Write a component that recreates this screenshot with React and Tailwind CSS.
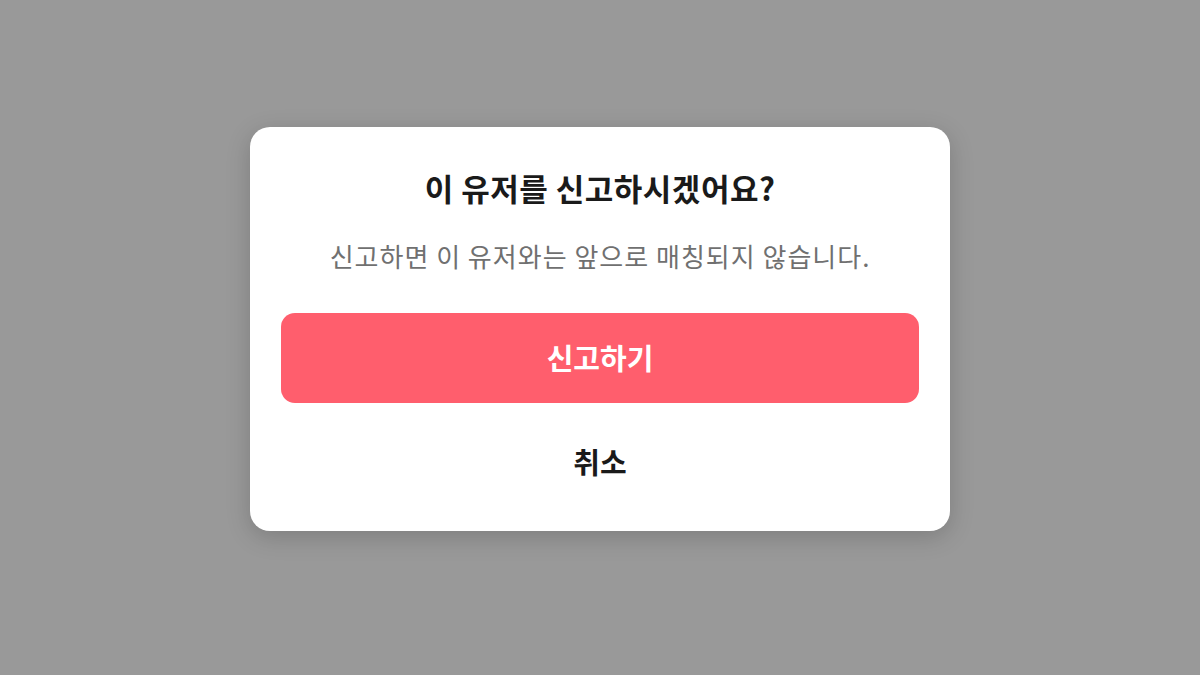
export default function App() {
  return (
    <div className="w-[1200px] h-[675px] bg-[#999999] flex items-center justify-center pb-[18px]" style={{ fontFamily: '"Noto Sans CJK KR", "Noto Sans", sans-serif' }}>
      <div className="w-[700px] h-[404px] bg-white rounded-[20px] shadow-[0_6px_24px_rgba(0,0,0,0.18)] flex flex-col items-center px-[31px] pt-[43px]">
        <h2 className="h-[36px] leading-[36px] text-[31px] font-bold text-[#1a1a1a] tracking-[0.5px]">
          이 유저를 신고하시겠어요?
        </h2>
        <p className="mt-[33px] h-[34px] leading-[34px] text-[26px] text-[#707070] tracking-[1px]">
          신고하면 이 유저와는 앞으로 매칭되지 않습니다.
        </p>
        <button className="mt-[40px] w-full h-[90px] rounded-[14px] bg-[#ff5e6d] text-white text-[29px] font-bold">
          신고하기
        </button>
        <button className="mt-[19px] w-full h-[80px] text-[29px] font-bold text-[#1a1a1a]">
          취소
        </button>
      </div>
    </div>
  );
}
